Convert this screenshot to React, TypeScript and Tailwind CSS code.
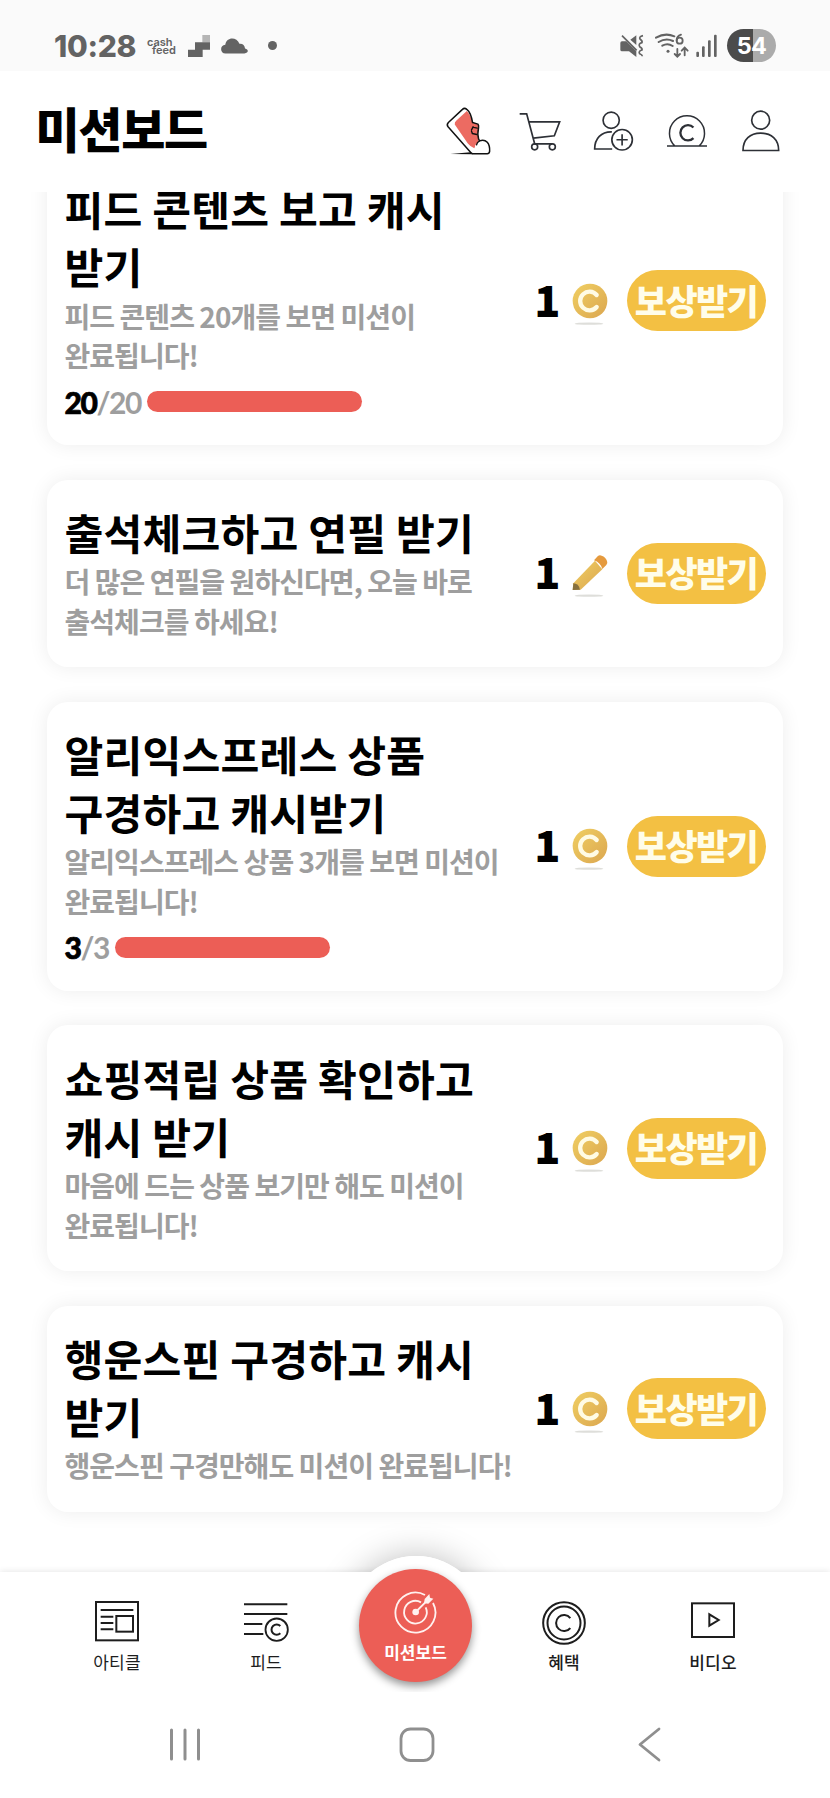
import type { ReactNode } from "react";

type Mission = {
  title: string[];
  desc: string[];
  reward: "coin" | "pencil";
  done?: number;
  total?: number;
};

const missions: Mission[] = [
  {
    title: ["피드 콘텐츠 보고 캐시", "받기"],
    desc: ["피드 콘텐츠 20개를 보면 미션이", "완료됩니다!"],
    reward: "coin",
    done: 20,
    total: 20,
  },
  {
    title: ["출석체크하고 연필 받기"],
    desc: ["더 많은 연필을 원하신다면, 오늘 바로", "출석체크를 하세요!"],
    reward: "pencil",
  },
  {
    title: ["알리익스프레스 상품", "구경하고 캐시받기"],
    desc: ["알리익스프레스 상품 3개를 보면 미션이", "완료됩니다!"],
    reward: "coin",
    done: 3,
    total: 3,
  },
  {
    title: ["쇼핑적립 상품 확인하고", "캐시 받기"],
    desc: ["마음에 드는 상품 보기만 해도 미션이", "완료됩니다!"],
    reward: "coin",
  },
  {
    title: ["행운스핀 구경하고 캐시", "받기"],
    desc: ["행운스핀 구경만해도 미션이 완료됩니다!"],
    reward: "coin",
  },
];

function StatusBar() {
  return (
    <div className="flex h-[71px] shrink-0 items-center bg-[#fafafa] pt-[20px] pr-[54px] pl-[54px] text-[#636363]">
      <span className="w-[82px] font-[Inter] text-[30px] leading-none font-extrabold tracking-[-0.3px]">10:28</span>
      <span className="ml-[11px] flex w-[32px] flex-col font-[Inter] text-[11px] leading-[8px] font-semibold">
        <span>cash</span>
        <span className="pl-[5px]">feed</span>
      </span>
      <svg className="ml-[9px] h-[22px] w-[22px]" viewBox="564 104 66 66" fill="#636363">
        <path d="M607 104h23v22h-23z" fill="#b5b5b5" />
        <path d="M585 126h45v22h-22v22h-44v-22h21z" />
      </svg>
      <svg className="ml-[11px] h-[16px] w-[27px]" viewBox="663 110 82 47" fill="#636363">
        <path d="M677 156c-18 0-18-25-1-26 3-25 35-26 43-3 10-1 16 5 17 14 11 2 12 15-2 15z" />
      </svg>
      <span className="ml-[20px] h-[9px] w-[9px] rounded-full bg-[#636363]" />
      <div className="ml-auto flex items-center">
        <svg className="h-[24px] w-[24px]" viewBox="614 99 72 72" fill="#636363" stroke="none">
          <path d="M615 126q0-5 5-5h13l30 30v17l-22-17h-21q-5 0-5-5z" />
          <path d="M645 116l18-13v29z" />
          <path d="M620 104l44 44" stroke="#636363" strokeWidth="5" />
          <path d="M683 104q-13 3-9 10 8 6 6 11-12 3-7 12 9 5 7 10-12 4-7 11 8 3 8 8" fill="none" stroke="#636363" strokeWidth="5" />
        </svg>
        <svg className="ml-[11px] h-[25px] w-[34px]" viewBox="718 98 102 75" fill="none" stroke="#636363" strokeWidth="6" strokeLinecap="round">
          <path d="M721 112q28-16 55-4M729 125q22-14 43-3M740 136q16-9 31 1" />
          <circle cx="757" cy="153" r="4.5" fill="#636363" stroke="none" />
          <path d="M796 103q-13 4-13 17" strokeWidth="5.5" />
          <circle cx="792" cy="121" r="9" strokeWidth="5.5" />
          <path d="M785 146v23m-8-8 8 8 8-8M807 165v-23m-9 9 9-9 9 9" strokeWidth="5.5" />
        </svg>
        <svg className="ml-[7px] h-[24px] w-[21px]" viewBox="841 99 63 72" fill="#636363">
          <rect x="842" y="152" width="8" height="16" rx="3" />
          <rect x="859" y="136" width="8" height="32" rx="3" />
          <rect x="877" y="118" width="8" height="50" rx="3" />
          <rect x="895" y="101" width="8" height="67" rx="3" />
        </svg>
        <span className="ml-[10px] flex h-[33px] w-[49px] items-center justify-center rounded-full bg-[linear-gradient(90deg,#4b4b4b_53%,#ababab_53%)] font-[Inter] text-[23.5px] leading-none font-bold tracking-[-0.8px] text-white">
          54
        </span>
      </div>
    </div>
  );
}

function Header() {
  return (
    <header className="relative z-10 flex h-[121px] shrink-0 items-center bg-white pl-[35.5px]">
      <h1 className="w-[409.5px] pb-[10px] text-[48px] leading-none font-black tracking-[-1.3px]">미션보드</h1>
      <svg className="h-[57px] w-[47px]" viewBox="90 310 140 170" fill="none" stroke="#111" strokeWidth="4.500" strokeLinejoin="round" strokeLinecap="round">
        <path d="M119 374q-1-7 5-12l31-28q12 12 17 35l18 6q-4 18-2 31l2 20-10 10q-1 11-4 8-10-3-18-13z" fill="#ec6b62" stroke="none" />
        <path d="M168 459l-69-78q-5-7 1-13l42-39q6-6 13 0 12 9 17 39l16 5q3 3 2 10-4 20 0 34l3 6q14-5 23 4 8 9 7 27-1 7-7 7h-45z" />
        <path d="M193 423q-8 4-9 12M172 382l14 3M169 390l5-9M171 401l14 3M169 394l3 8" strokeWidth="4" />
        <path d="M106 462l60-5 6 6z" fill="#111" stroke="none" />
      </svg>
      <svg className="ml-[25px] h-[57px] w-[45px]" viewBox="305 310 135 170" fill="none" stroke="#2d3036" strokeWidth="5">
        <path d="M313 342h21l24 90h53M341 366h92l-16 42-63 7" />
        <circle cx="358" cy="441" r="9" />
        <circle cx="411" cy="441" r="9" />
      </svg>
      <svg className="ml-[30px] h-[57px] w-[43px]" viewBox="530 310 130 170" fill="none" stroke="#2d3036" strokeWidth="5">
        <circle cx="588" cy="361" r="24.5" />
        <path d="M590 396c-32-1-52 20-52 52h53" />
        <circle cx="621" cy="420" r="31" />
        <path d="M621 403v34M604 420h34" />
      </svg>
      <svg className="ml-[30px] h-[57px] w-[43px]" viewBox="750 310 130 170" fill="none" stroke="#2d3036" strokeWidth="4.500">
        <path d="M756 439h121M780 439a53 53 0 1 1 73 0" />
        <path d="M836 383a23 23 0 1 0 0 32" strokeWidth="7" />
      </svg>
      <svg className="ml-[33px] h-[57px] w-[40px]" viewBox="978 310 120 170" fill="none" stroke="#2d3036" strokeWidth="5">
        <circle cx="1037" cy="361" r="27" />
        <path d="M984 452c0-33 21-52 53-52s54 19 54 52z" />
      </svg>
    </header>
  );
}

function RewardIcon({ kind }: { kind: "coin" | "pencil" }) {
  return (
    <svg className="h-[46px] w-[38px] shrink-0" viewBox="214 124 114 138">
      <defs>
        <linearGradient id="gold" x1="0" y1="0" x2="1" y2="1">
          <stop offset="0" stopColor="#f0cf62" />
          <stop offset="1" stopColor="#dba650" />
        </linearGradient>
      </defs>
      {kind === "coin" ? (
        <>
          <circle cx="271" cy="184" r="52" fill="url(#gold)" />
          <path d="M291 166a28 28 0 1 0 0 36" fill="none" stroke="#fffbe4" strokeWidth="13" strokeLinecap="round" />
        </>
      ) : (
        <>
          <path d="M221 215l65-68 22 26-65 61-24 1z" fill="url(#gold)" />
          <path d="M283 146l11-12q5-5 12-2 12 4 16 16 3 7-2 12l-12 12q-6-20-25-26z" fill="#e59a3e" />
          <path d="M221 215q16 0 20 19l-22 1z" fill="#87703d" />
        </>
      )}
      <ellipse cx="268" cy="252" rx="43" ry="3.500" fill="#dededa" />
    </svg>
  );
}

function MissionCard({ m }: { m: Mission }) {
  return (
    <section className="flex shrink-0 items-center rounded-[21px] bg-white py-[25.2px] pr-[17.5px] pl-[18px] shadow-[0_0_20px_rgba(0,0,0,0.075)]">
      <div className="flex-1">
        <h2 className="relative -top-[2px] text-[42.2px] leading-[58.3px] font-bold tracking-[0.18px] whitespace-nowrap">
          {m.title.map((t) => (
            <span key={t} className="block">{t}</span>
          ))}
        </h2>
        <p className="relative -top-[1px] text-[28px] leading-[39.3px] font-bold tracking-[-0.95px] whitespace-nowrap text-[#9e9e9e]">
          {m.desc.map((t) => (
            <span key={t} className="block">{t}</span>
          ))}
        </p>
        {m.total !== undefined && (
          <div className="flex h-[43.5px] items-center pt-[7px]">
            <span className="font-[Lato] text-[30px] leading-none font-bold tracking-[-1.4px] text-[#9e9e9e]">
              <b className="text-black [-webkit-text-stroke:0.7px_black]">{m.done}</b>/{m.total}
            </span>
            <span className="ml-[6px] h-[21px] w-[215px] rounded-full bg-[#ec5e56]" />
          </div>
        )}
      </div>
      <span className="pb-[5px] text-[43px] leading-none font-black">1</span>
      <div className="mr-[18px] ml-[10px] pt-[6px]">
        <RewardIcon kind={m.reward} />
      </div>
      <button className="flex h-[61px] w-[139px] items-center justify-center rounded-full bg-[#f3c043] pb-[3px] text-[35px] leading-none font-black tracking-[-1.6px] whitespace-nowrap text-[#fffdea]">
        보상받기
      </button>
    </section>
  );
}

function Tab({ label, bold, children }: { label: string; bold?: boolean; children: ReactNode }) {
  return (
    <div className="flex w-[149px] flex-col items-center pt-[27px] text-[#1d1d1d]">
      {children}
      <span className={bold ? "mt-[8px] text-[17px] leading-[20px] font-medium tracking-[0.2px]" : "mt-[8px] text-[17px] leading-[20px] font-normal tracking-[0.2px]"}>{label}</span>
    </div>
  );
}

function TabBar() {
  return (
    <nav className="relative h-[120px] shrink-0">
      <span className="absolute -top-[16px] left-[345px] h-[142px] w-[142px] rounded-full shadow-[0_0_34px_rgba(0,0,0,0.26)]" />
      <div className="relative h-full bg-white pt-px shadow-[0_-1px_6px_rgba(0,0,0,0.09)]">
        <div className="flex justify-center">
          <Tab label="아티클">
            <svg className="h-[44px] w-[46px]" viewBox="283 180 138 132" fill="none" stroke="#1d1d1d" strokeWidth="6">
              <rect x="289" y="186" width="126" height="115" />
              <path d="M303 210h98M303 230h38M303 249h38M303 268h38" />
              <rect x="350" y="228" width="50" height="47" />
            </svg>
          </Tab>
          <Tab label="피드">
            <svg className="h-[44px] w-[46px]" viewBox="731 180 138 132" fill="none" stroke="#1d1d1d" strokeWidth="6">
              <path d="M734 193h130M734 222h130M734 252h55M734 282h58" />
              <circle cx="832" cy="269" r="33.5" strokeWidth="5.500" />
              <path d="M843 258a15.500 15.500 0 1 0 0 22" />
            </svg>
          </Tab>
          <div className="w-[149px]" />
          <Tab label="혜택" bold>
            <svg className="h-[44px] w-[46px] overflow-visible" viewBox="380 180 138 132" fill="none" stroke="#1d1d1d" strokeWidth="6">
              <circle cx="449" cy="249" r="62.5" />
              <circle cx="449" cy="249" r="49.500" />
              <path d="M468 234a24 24 0 1 0 0 30" />
            </svg>
          </Tab>
          <Tab label="비디오" bold>
            <svg className="h-[44px] w-[46px]" viewBox="825 180 138 132" fill="none" stroke="#1d1d1d" strokeWidth="6">
              <rect x="831" y="190" width="126" height="101" />
              <path d="M883 223v34l28-17z" />
            </svg>
          </Tab>
        </div>
      </div>
      <span className="absolute -top-[16px] left-[345px] h-[142px] w-[142px] rounded-full bg-white" />
      <div className="absolute -top-[3px] left-[359px] flex h-[113px] w-[113px] flex-col items-center rounded-full bg-[#ec5e56] pt-[21px] text-white shadow-[0_4px_9px_rgba(0,0,0,0.42)]">
        <svg className="h-[44px] w-[44px]" viewBox="132 120 132 132" fill="none" stroke="#fff1ef" strokeWidth="5.500">
          <path d="M225 135a60 60 0 1 0 24 24" />
          <path d="M213 157a34 34 0 1 0 14 15" />
          <circle cx="197" cy="186" r="10" fill="#fff1ef" stroke="none" />
          <path d="M197 186l38-38" />
          <path d="M222 160l2-13 14-15 2 11 10 3-15 15z" fill="#fff1ef" stroke="none" />
        </svg>
        <span className="mt-[8px] text-[17px] leading-[20px] font-bold">미션보드</span>
      </div>
    </nav>
  );
}

function SystemNav() {
  return (
    <div className="relative grid h-[106px] shrink-0 grid-cols-[232px_232px_232px] place-content-center place-items-center bg-white pl-[3px] *:h-[36px] *:w-[36px]">
      <svg viewBox="0 0 36 36" stroke="#8f8f8f" strokeWidth="3" strokeLinecap="round">
        <path d="M4.500 3v29M18 3v29M31.500 3v29" />
      </svg>
      <svg viewBox="0 0 36 36" fill="none" stroke="#8f8f8f" strokeWidth="2.800">
        <rect x="2" y="2" width="32" height="31.500" rx="9.500" />
      </svg>
      <svg viewBox="0 0 36 36" fill="none" stroke="#8f8f8f" strokeWidth="2.800" strokeLinecap="round" strokeLinejoin="round">
        <path d="M28 2L9 17.500 28 33" />
      </svg>
    </div>
  );
}

export default function App() {
  return (
    <div className="flex h-[1798px] w-[830px] flex-col overflow-hidden bg-white font-['Noto_Sans_CJK_KR',sans-serif] text-black">
      <StatusBar />
      <Header />
      <main className="min-h-0 flex-1 overflow-hidden">
        <div className="-mt-[36px] flex flex-col gap-[34.700px] pr-[47px] pl-[46.500px]">
          {missions.map((m) => (
            <MissionCard key={m.title[0]} m={m} />
          ))}
        </div>
      </main>
      <TabBar />
      <SystemNav />
    </div>
  );
}
